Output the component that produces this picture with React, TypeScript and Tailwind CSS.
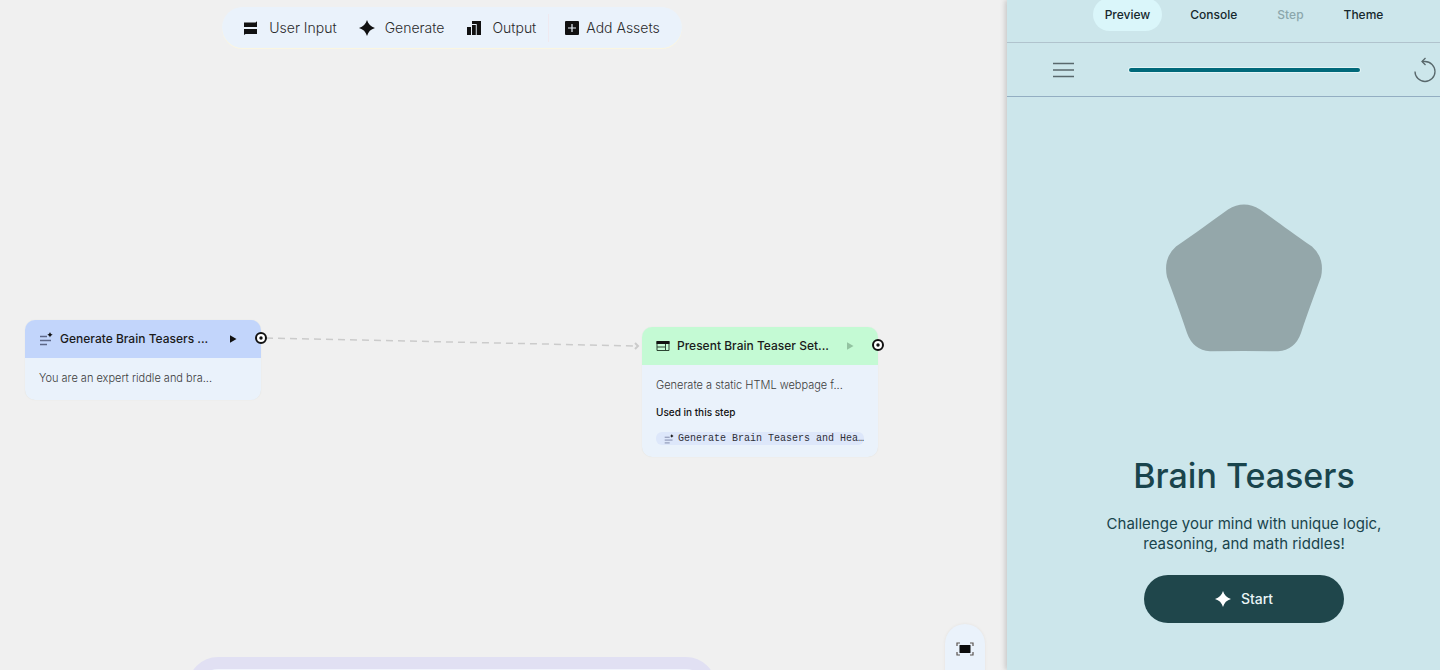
import React from 'react';
import clsx from 'clsx';

interface IconProps {
  className?: string;
}

function UserInputIcon({ className }: IconProps) {
  return (
    <svg className={className} viewBox="0 0 16 16" fill="currentColor" aria-hidden="true">
      <path d="M1 2.500h11.500L14 1.300V7H1zM1 9h13v5H2.500L1 15z" />
    </svg>
  );
}

function SparkIcon({ className }: IconProps) {
  return (
    <svg className={className} viewBox="0 0 16 16" fill="currentColor" aria-hidden="true">
      <path d="M8 0C9.200 4.200 11.800 6.800 16 8c-4.200 1.200-6.800 3.800-8 8-1.200-4.200-3.800-6.800-8-8 4.200-1.200 6.800-3.800 8-8z" />
    </svg>
  );
}

function OutputIcon({ className }: IconProps) {
  return (
    <svg className={className} viewBox="0 0 16 16" fill="currentColor" aria-hidden="true">
      <path d="M1 7h4v8H1zM6 5h3.800v10H6zM6 1h9v14h-4.300V4H6z" />
    </svg>
  );
}

function AddIcon({ className }: IconProps) {
  return (
    <svg className={className} viewBox="0 0 16 16" aria-hidden="true">
      <rect x="1" y="1" width="14" height="14" rx="1" fill="currentColor" />
      <path d="M8 4v8M4 8h8" stroke="#eaf2fb" strokeWidth="1.200" />
    </svg>
  );
}

function TextSparkIcon({ className }: IconProps) {
  return (
    <svg className={className} viewBox="0 0 14 14" aria-hidden="true">
      <path d="M1 4.500h7M1 8.500h11M1 12.500h7" stroke="currentColor" strokeWidth="1.300" fill="none" />
      <path d="M11 0c.5 1.700 1 2.200 2.700 2.700-1.700.5-2.200 1-2.700 2.700-.5-1.700-1-2.200-2.700-2.700C10 2.200 10.500 1.700 11 0z" fill="#111" />
    </svg>
  );
}

function WebIcon({ className }: IconProps) {
  return (
    <svg className={className} viewBox="0 0 14 14" aria-hidden="true">
      <path d="M1 2.500h12v9H1zM1 8h8.500M9.500 5v6.500" fill="none" stroke="#2c4433" />
      <path d="M.5 2h13v3H.5z" fill="#111" />
    </svg>
  );
}

function PlayIcon({ className }: IconProps) {
  return (
    <svg className={className} viewBox="0 0 8 8" fill="currentColor" aria-hidden="true">
      <path d="M1 .2 7.500 4 1 7.800z" />
    </svg>
  );
}

function FitIcon({ className }: IconProps) {
  return (
    <svg className={className} viewBox="0 0 18 14" aria-hidden="true">
      <path d="M1 4V1h3M14 1h3v3M17 10v3h-3M4 13H1v-3" fill="none" stroke="#5b5450" strokeWidth="1.200" />
      <rect x="3.500" y="3" width="11" height="8" rx=".5" fill="#0c0c0c" />
    </svg>
  );
}

function RestartIcon({ className }: IconProps) {
  return (
    <svg className={className} viewBox="0 0 24 26" fill="none" stroke="currentColor" strokeWidth="1.300" aria-hidden="true">
      <path d="M3 14.500a10 10 0 1 0 10-10H10" />
      <path d="M13.500 1 10 4.500 13.500 8" />
    </svg>
  );
}

function Port() {
  return (
    <svg className="absolute -right-1.5 top-3 size-3" viewBox="0 0 12 12" aria-hidden="true">
      <circle cx="6" cy="6" r="5" fill="#fff" stroke="#111" strokeWidth="2" />
      <circle cx="6" cy="6" r="1.700" fill="#111" />
    </svg>
  );
}

const tools = [
  { label: 'User Input', icon: UserInputIcon },
  { label: 'Generate', icon: SparkIcon },
  { label: 'Output', icon: OutputIcon },
];

const tabs = [
  { label: 'Preview', state: 'active' },
  { label: 'Console', state: 'idle' },
  { label: 'Step', state: 'disabled' },
  { label: 'Theme', state: 'idle' },
];

function Toolbar() {
  return (
    <div className="flex h-[41px] items-center rounded-full bg-[#eaf2fb] pl-[21px] pr-[22px] text-sm font-light text-[#2b2b2b] shadow-[0_1px_0_#fbf6e0]">
      <div className="flex items-center gap-[22px]">
        {tools.map(({ label, icon: Icon }) => (
          <button key={label} type="button" className="flex items-center gap-2.5">
            <Icon className="size-4 text-[#111]" />
            {label}
          </button>
        ))}
      </div>
      <div className="mx-3 h-7 w-px bg-[#efe9ef]" />
      <button type="button" className="flex items-center gap-1.5 pl-[3px]">
        <AddIcon className="size-4 text-[#111]" />
        Add Assets
      </button>
    </div>
  );
}

interface NodeProps {
  title: string;
  icon: React.ReactNode;
  className: string;
  headerClassName: string;
  playClassName: string;
  children: React.ReactNode;
}

function StepNode({ title, icon, className, headerClassName, playClassName, children }: NodeProps) {
  return (
    <section className={clsx('absolute w-[236px] rounded-[10px] bg-[#eaf2fb] shadow-[0_0_1px_#e0dcd0]', className)}>
      <header className={clsx('relative flex h-[38px] items-center rounded-t-[10px] pl-3.5 pr-6', headerClassName)}>
        {icon}
        <h2 className="ml-[7px] flex-1 whitespace-nowrap text-xs font-medium text-[#1b1b1b]">{title}</h2>
        <button type="button" aria-label="Run step" className={playClassName}>
          <PlayIcon className="size-2" />
        </button>
        <Port />
      </header>
      {children}
    </section>
  );
}

function Canvas() {
  return (
    <main className="relative min-w-0 flex-1 overflow-hidden bg-[#f0f0f0]">
      <div className="flex justify-center pr-[103px] pt-[7px]">
        <Toolbar />
      </div>

      <svg className="absolute left-[262px] top-[332px] h-5 w-[378px]" viewBox="0 0 378 20" fill="none" stroke="#cbcbcb" aria-hidden="true">
        <path d="M4 6 374 14" strokeWidth="1.500" strokeDasharray="7 5" />
        <path d="M373 11l3 3-3 3" strokeWidth="2" />
      </svg>

      <StepNode
        title="Generate Brain Teasers ..."
        icon={<TextSparkIcon className="size-3.5 text-[#5c6788]" />}
        className="left-[25px] top-[320px]"
        headerClassName="bg-[#c2d5fb]"
        playClassName="text-[#111]"
      >
        <p className="px-3.5 pb-3.5 pt-3 text-[11px] font-light leading-4 text-[#3c3c3c]">You are an expert riddle and bra...</p>
      </StepNode>

      <StepNode
        title="Present Brain Teaser Set..."
        icon={<WebIcon className="size-3.5" />}
        className="left-[642px] top-[327px]"
        headerClassName="bg-[#c4fad4]"
        playClassName="text-[#93c3a1]"
      >
        <div className="px-3.5 pb-3 pt-3">
          <p className="text-[11px] font-light leading-4 text-[#3c3c3c]">Generate a static HTML webpage f...</p>
          <h3 className="mt-[11px] text-[10px] font-medium leading-4 text-[#111]">Used in this step</h3>
          <div className="mt-3 flex h-[13px] items-center gap-1 whitespace-nowrap rounded-md bg-[#dde7fa] pl-2 font-['Liberation_Mono',monospace] text-[10px] text-[#2f2f38]">
            <TextSparkIcon className="size-2.5 text-[#7c86a6]" />
            Generate Brain Teasers and Hea…
          </div>
        </div>
      </StepNode>

      <div className="absolute inset-x-0 bottom-0 flex h-[13px] justify-center pr-[103px]">
        <div className="h-20 w-[528px] rounded-[30px] border-12 border-[#e1e0f3] bg-[#f1f4fc]" />
      </div>
      <button
        type="button"
        aria-label="Zoom to fit"
        className="absolute -bottom-5 right-[22px] flex h-[66px] w-10 justify-center rounded-full bg-[#eaf2fb] pt-[18px] shadow-[0_0_3px_#e4e0dc]"
      >
        <FitIcon className="h-3.5 w-[18px]" />
      </button>
    </main>
  );
}

function PreviewPanel() {
  return (
    <aside className="relative z-10 w-[433px] shrink-0 bg-[#cce6eb] shadow-[-2px_0_5px_#c8c8c8]">
      <div className="w-[474px] text-[#19444c]">
        <nav className="flex h-[43px] items-start justify-center gap-4 border-b border-[#b0c3cd]" aria-label="Panel">
          {tabs.map(({ label, state }) => (
            <button
              key={label}
              type="button"
              disabled={state === 'disabled'}
              className={clsx(
                '-mt-0.5 h-[33px] rounded-full px-3 text-xs font-medium',
                state === 'active' && 'bg-[#daf6fa] text-[#16282d]',
                state === 'idle' && 'text-[#16282d]',
                state === 'disabled' && 'text-[#8ba7ac]'
              )}
            >
              {label}
            </button>
          ))}
        </nav>

        <div className="flex h-[54px] items-center justify-between border-b border-[#93aec2] px-[45px]">
          <button type="button" aria-label="Menu" className="text-[#59686c]">
            <svg className="h-4 w-6" viewBox="0 0 24 16" stroke="currentColor" strokeWidth="1.300" aria-hidden="true">
              <path d="M1 1.500h21M1 8h21M1 14.500h21" />
            </svg>
          </button>
          <div className="h-1 w-[231px] rounded-full bg-[#00697a] shadow-[0_0_0_1px_#e2f4f6]" />
          <button type="button" aria-label="Start over" className="text-[#59686c]">
            <RestartIcon className="h-[26px] w-6" />
          </button>
        </div>

        <div className="flex flex-col items-center pt-[107px] text-center">
          <svg className="h-[148px] w-[156px]" viewBox="0 0 156 148" fill="#94a7aa" aria-hidden="true">
            <path d="M62 5.500Q78-4.500 94 5.500C112 18 126 29 146 42.500Q159 54 155 73C148 92 142 108 135 129Q129 146 112 147.300Q78 146.500 44 147.300Q27 146 21 129C14 108 8 92 1 73Q-3 54 10 42.500C30 29 44 18 62 5.500z" />
          </svg>
          <h1 className="mt-[104px] text-[34px] font-medium leading-10">Brain Teasers</h1>
          <p className="mt-[18px] w-[300px] text-[15px] leading-5">
            Challenge your mind with unique logic, reasoning, and math riddles!
          </p>
          <button type="button" className="mt-[21px] flex h-12 w-[200px] items-center justify-center gap-2.5 rounded-full bg-[#1f464b] text-sm font-medium text-[#e9f4f6]">
            <SparkIcon className="size-4 text-white" />
            Start
          </button>
        </div>
      </div>
    </aside>
  );
}

export default function App() {
  return (
    <div className="flex h-screen overflow-hidden font-['Inter',sans-serif]">
      <Canvas />
      <PreviewPanel />
    </div>
  );
}
